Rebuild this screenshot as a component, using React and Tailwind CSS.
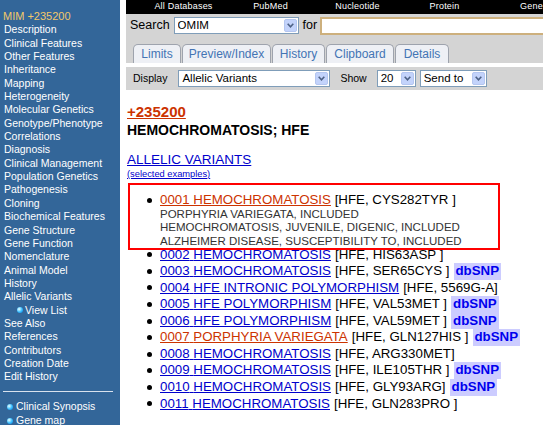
import React from 'react';

const sideItems = [
  'Description', 'Clinical Features', 'Other Features', 'Inheritance', 'Mapping',
  'Heterogeneity', 'Molecular Genetics', 'Genotype/Phenotype', 'Correlations',
  'Diagnosis', 'Clinical Management', 'Population Genetics', 'Pathogenesis',
  'Cloning', 'Biochemical Features', 'Gene Structure', 'Gene Function',
  'Nomenclature', 'Animal Model', 'History', 'Allelic Variants',
];

const sideItems2 = ['See Also', 'References', 'Contributors', 'Creation Date', 'Edit History'];

const variants = [
  { id: '0002', name: 'HEMOCHROMATOSIS', info: '[HFE, HIS63ASP ]' },
  { id: '0003', name: 'HEMOCHROMATOSIS', info: '[HFE, SER65CYS ]', snp: true },
  { id: '0004', name: 'HFE INTRONIC POLYMORPHISM', info: '[HFE, 5569G-A]' },
  { id: '0005', name: 'HFE POLYMORPHISM', info: '[HFE, VAL53MET ]', snp: true },
  { id: '0006', name: 'HFE POLYMORPHISM', info: '[HFE, VAL59MET ]', snp: true },
  { id: '0007', name: 'PORPHYRIA VARIEGATA', info: '[HFE, GLN127HIS ]', snp: true, red: true },
  { id: '0008', name: 'HEMOCHROMATOSIS', info: '[HFE, ARG330MET]' },
  { id: '0009', name: 'HEMOCHROMATOSIS', info: '[HFE, ILE105THR ]', snp: true },
  { id: '0010', name: 'HEMOCHROMATOSIS', info: '[HFE, GLY93ARG]', snp: true },
  { id: '0011', name: 'HEMOCHROMATOSIS', info: '[HFE, GLN283PRO ]' },
];

const Ball = ({ className = '' }) => (
  <span className={`inline-block w-[6px] h-[6px] rounded-full bg-[radial-gradient(circle_at_35%_35%,#e8ffff,#33bbff_55%,#0a78d8)] ${className}`}></span>
);

const Chevron = () => (
  <span className="w-[13px] h-[13px] flex items-center justify-center bg-[#c3d3fb] border border-[#b4c6f0] rounded-[2px] shrink-0">
    <svg width="7" height="5" viewBox="0 0 7 5">
      <path d="M0.7 0.8 L3.5 3.8 L6.3 0.8" fill="none" stroke="#4d6185" strokeWidth="1.6" />
    </svg>
  </span>
);

const Select = ({ value, className }) => (
  <div className={`flex items-center h-[17px] bg-white border border-[#7f9db9] pl-[3px] pr-[1px] ${className}`}>
    <span className="flex-1 text-[11.5px] leading-none text-black whitespace-nowrap overflow-hidden">{value}</span>
    <Chevron />
  </div>
);

const Bullet = () => (
  <span className="w-[13px] shrink-0 flex items-center h-[16.56px]">
    <span className="w-[5px] h-[5px] rounded-full bg-black"></span>
  </span>
);

const DbSnp = () => (
  <span className="ml-[4px] px-[2px] bg-[#ccccff] font-bold text-[#0000ee]">dbSNP</span>
);

const App = () => {
  return (
    <div className="flex h-[425px] w-[543px] overflow-hidden bg-white font-['Liberation_Sans',Arial,sans-serif]">
      {/* Sidebar */}
      <div className="w-[120px] shrink-0 bg-[#336699] pt-[10px] text-white text-[10.5px] leading-[13.35px]">
        <div className="pl-[3px] text-[11px] text-[#f2c869]">MIM +235200</div>
        {sideItems.map((s) => (
          <div key={s} className="pl-[4px]">{s}</div>
        ))}
        <div className="flex items-center pl-[17px] gap-[2px]">
          <Ball /> <span>View List</span>
        </div>
        {sideItems2.map((s) => (
          <div key={s} className="pl-[4px]">{s}</div>
        ))}
        <div className="mt-[7px] mx-[3px] w-[110px] h-[1px] bg-[#d8e2ee]"></div>
        <div className="mt-[8px] flex items-center h-[14.3px] pl-[7px] gap-[3px]">
          <Ball /> <span>Clinical Synopsis</span>
        </div>
        <div className="flex items-center h-[14.3px] pl-[7px] gap-[3px]">
          <Ball /> <span>Gene map</span>
        </div>
      </div>

      {/* Main */}
      <div className="flex-1 min-w-0 pl-[6px] overflow-hidden">
        {/* top database bar */}
        <div className="h-[14px] bg-black flex items-center pl-[14px] text-white text-[9px] tracking-[0.2px] whitespace-nowrap">
          {['All Databases', 'PubMed', 'Nucleotide', 'Protein', 'Gene'].map((d) => (
            <div key={d} className="w-[87px] shrink-0 text-center">{d}</div>
          ))}
        </div>

        {/* search + tabs */}
        <div className="bg-[#d4d4d4] h-[49px]">
          <div className="h-[23px] flex items-center pl-[4px] text-[12.5px] text-black whitespace-nowrap">
            <span>Search</span>
            <Select value="OMIM" className="ml-[4px] w-[125px] shrink-0" />
            <span className="ml-[4px]">for</span>
            <div className="ml-[3px] w-[300px] h-[18px] shrink-0 bg-white border-2 border-[#cdb07d]"></div>
          </div>
          <div className="mt-[7px] flex items-end gap-[1px] pl-[7px] h-[19px]">
            {[
              ['Limits', 'w-[48px]'],
              ['Preview/Index', 'w-[89px]'],
              ['History', 'w-[53px]'],
              ['Clipboard', 'w-[68px]'],
              ['Details', 'w-[54px]'],
            ].map(([t, w]) => (
              <div
                key={t}
                className={`${w} h-[19px] shrink-0 flex items-center justify-center bg-[#eef0f5] border border-b-0 border-[#9ea3ad] rounded-t-[5px] text-[12px] text-[#4374b4]`}
              >
                {t}
              </div>
            ))}
          </div>
        </div>

        {/* display row */}
        <div className="mt-[4px] h-[23px] bg-[#d4d4d4] flex items-center pl-[7px] text-[10.5px] text-black whitespace-nowrap">
          <span>Display</span>
          <Select value="Allelic Variants" className="ml-[11px] w-[152px] shrink-0" />
          <span className="ml-[10px]">Show</span>
          <Select value="20" className="ml-[10px] w-[39px] shrink-0" />
          <Select value="Send to" className="ml-[4px] w-[67px] shrink-0" />
        </div>

        {/* content */}
        <div className="pl-[1px] text-black">
          <div className="mt-[12.8px] text-[15px] leading-[18px] font-bold text-[#cc3300] underline">+235200</div>
          <div className="text-[14px] leading-[18px] font-bold">HEMOCHROMATOSIS; HFE</div>
          <div className="mt-[13px] text-[13.5px] leading-[16px] text-[#0000cc] underline">ALLELIC VARIANTS</div>
          <div className="mt-[1px] text-[9.3px] leading-[11px] text-[#0000cc] underline">(selected examples)</div>

          <div className="mt-[3.6px] ml-[1px] w-[372px] border-2 border-[#ff0000] pt-[6.5px] pl-[17px] text-[13.3px] whitespace-nowrap">
            <div className="flex">
              <Bullet />
              <div>
                <div className="leading-[16px]">
                  <span className="text-[#cc3300] underline">0001 HEMOCHROMATOSIS</span>{' '}
                  <span>[HFE, CYS282TYR ]</span>
                </div>
                <div className="text-[11.5px] leading-[13.5px] text-[#333333]">
                  <div>PORPHYRIA VARIEGATA, INCLUDED</div>
                  <div>HEMOCHROMATOSIS, JUVENILE, DIGENIC, INCLUDED</div>
                  <div>ALZHEIMER DISEASE, SUSCEPTIBILITY TO, INCLUDED</div>
                </div>
              </div>
            </div>
          </div>

          <div className="mt-[-3.8px] pl-[20px] text-[13.3px] leading-[16.56px] whitespace-nowrap">
            {variants.map((v) => (
              <div key={v.id} className="flex h-[16.56px] items-center">
                <Bullet />
                <span className={`underline ${v.red ? 'text-[#cc3300]' : 'text-[#0000cc]'}`}>
                  {v.id} {v.name}
                </span>
                <span className="ml-[4px]">{v.info}</span>
                {v.snp && <DbSnp />}
              </div>
            ))}
          </div>
        </div>
      </div>
    </div>
  );
};

export default App;
